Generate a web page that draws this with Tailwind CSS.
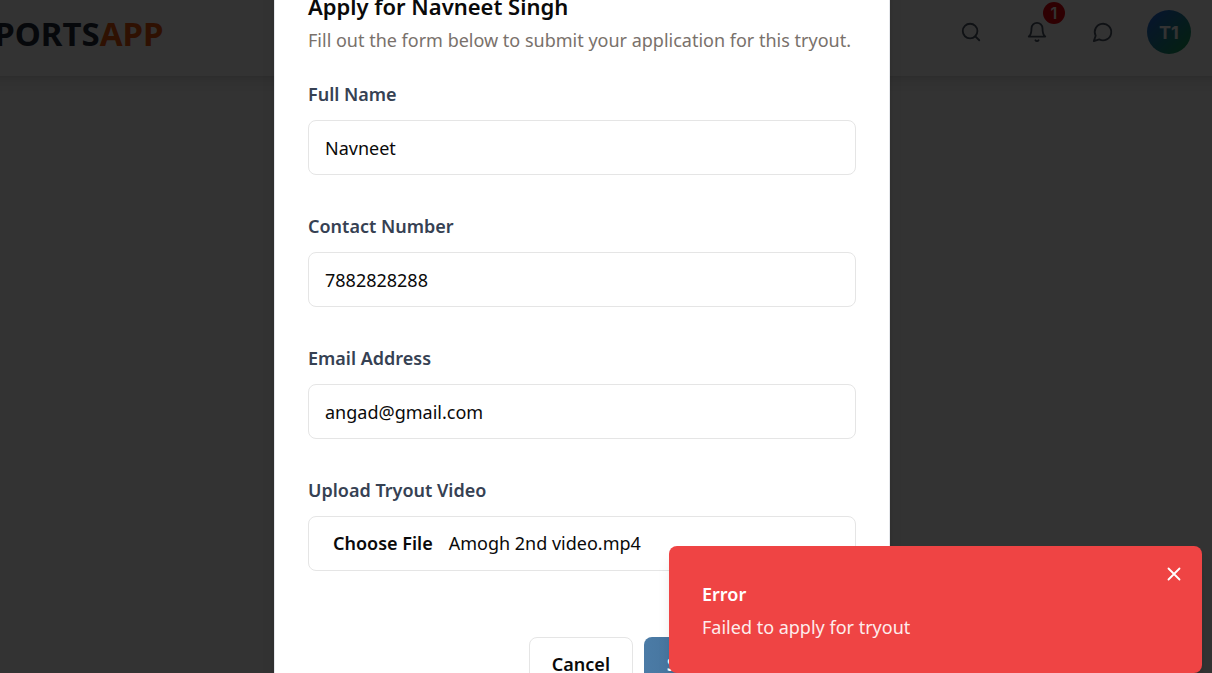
<!DOCTYPE html>
<html lang="en">
<head>
<meta charset="utf-8">
<meta name="viewport" content="width=device-width, initial-scale=1">
<title>Apply for tryout</title>
<script src="https://cdn.jsdelivr.net/npm/@tailwindcss/browser@4"></script>
</head>
<body class="relative h-screen overflow-hidden bg-white font-['Segoe_UI','Noto_Sans',sans-serif] text-[18px] text-neutral-950">
<header class="-mx-12 flex h-[76px] items-start justify-between bg-white pt-2.5 pr-[69px] pl-6 shadow-lg">
  <a href="#" class="text-[33px] leading-12 font-bold text-[#1e293b]">SPORTS<span class="text-[#ea580c]">APP</span></a>
  <nav class="flex items-center gap-[22px] text-gray-600">
    <button type="button" aria-label="Search" class="flex size-11 items-center justify-center">
      <svg class="size-[22px]" viewBox="0 0 24 24" fill="none" stroke="currentColor" stroke-width="2" stroke-linecap="round" stroke-linejoin="round"><circle cx="11" cy="11" r="8"/><path d="m21 21-4.3-4.3"/></svg>
    </button>
    <button type="button" aria-label="Notifications" class="relative flex size-11 items-center justify-center">
      <svg class="size-[22px]" viewBox="0 0 24 24" fill="none" stroke="currentColor" stroke-width="2" stroke-linecap="round" stroke-linejoin="round"><path d="M6 8a6 6 0 0 1 12 0c0 7 3 9 3 9H3s3-2 3-9"/><path d="M10.3 21a1.94 1.94 0 0 0 3.4 0"/></svg>
      <span class="absolute -top-2 -right-1.5 flex size-[22px] items-center justify-center rounded-full bg-red-600 font-['Inter',sans-serif] text-base font-semibold text-white">1</span>
    </button>
    <button type="button" aria-label="Messages" class="flex size-11 items-center justify-center">
      <svg class="size-[22px]" viewBox="0 0 24 24" fill="none" stroke="currentColor" stroke-width="2" stroke-linecap="round" stroke-linejoin="round"><path d="M7.9 20A9 9 0 1 0 4 16.1L2 22Z"/></svg>
    </button>
    <button type="button" aria-label="Account" class="flex size-11 items-center justify-center rounded-full bg-linear-to-br/srgb from-[#2563eb] to-[#16a34a] font-['Inter',sans-serif] text-[18px] font-bold text-white">T1</button>
  </nav>
</header>

<div class="absolute inset-0 flex items-start justify-center bg-black/80 pr-12">
  <section role="dialog" aria-labelledby="title" class="-mt-10 w-[616px] shrink-0 border border-gray-200 bg-white px-[33px] pt-[33px] pb-8 shadow-lg">
    <h2 id="title" class="text-[22px] leading-6 font-semibold">Apply for Navneet Singh</h2>
    <p class="mt-2 leading-7 text-stone-500">Fill out the form below to submit your application for this tryout.</p>
    <form class="mt-[30px]">
      <div class="flex flex-col gap-[41px]">
        <div class="flex flex-col gap-4">
          <label for="name" class="leading-5 font-semibold text-gray-700">Full Name</label>
          <input id="name" type="text" value="Navneet" class="h-[55px] rounded-lg border border-neutral-200 px-4 outline-none">
        </div>
        <div class="flex flex-col gap-4">
          <label for="phone" class="leading-5 font-semibold text-gray-700">Contact Number</label>
          <input id="phone" type="tel" value="7882828288" class="h-[55px] rounded-lg border border-neutral-200 px-4 outline-none">
        </div>
        <div class="flex flex-col gap-4">
          <label for="email" class="leading-5 font-semibold text-gray-700">Email Address</label>
          <input id="email" type="email" value="angad@gmail.com" class="h-[55px] rounded-lg border border-neutral-200 px-4 outline-none">
        </div>
        <div class="flex flex-col gap-4">
          <label for="video" class="leading-5 font-semibold text-gray-700">Upload Tryout Video</label>
          <input id="video" type="file" accept="video/*" class="h-[55px] rounded-lg border border-neutral-200 px-4 py-[13px] file:mr-2 file:border-0 file:bg-transparent file:px-2 file:font-semibold">
        </div>
      </div>
      <div class="mt-[66px] flex justify-end gap-[11px]">
        <button type="button" class="h-[55px] rounded-lg border border-neutral-200 bg-white px-[22px] font-semibold">Cancel</button>
        <button type="submit" class="h-[55px] w-[212px] rounded-lg bg-linear-to-r from-[#4b7ba6] to-[#2f5573] px-[22px] text-center font-semibold whitespace-nowrap text-white">Submit Application</button>
      </div>
    </form>
  </section>
</div>

<div role="alert" class="absolute right-2.5 bottom-0 flex w-[533px] items-start justify-between rounded-lg bg-[#ef4444] pt-[34px] pr-[17px] pb-8 pl-[33px] text-white shadow-lg">
  <div>
    <div class="leading-7 font-semibold">Error</div>
    <div class="mt-[5px] leading-7 opacity-90">Failed to apply for tryout</div>
  </div>
  <button type="button" aria-label="Close" class="-mt-[17px]">
    <svg class="size-[22px]" viewBox="0 0 24 24" fill="none" stroke="currentColor" stroke-width="2" stroke-linecap="round" stroke-linejoin="round"><path d="M18 6 6 18M6 6l12 12"/></svg>
  </button>
</div>
<script>
  const transfer = new DataTransfer();
  transfer.items.add(new File([''], 'Amogh 2nd video.mp4', { type: 'video/mp4' }));
  document.getElementById('video').files = transfer.files;
</script>
</body>
</html>
